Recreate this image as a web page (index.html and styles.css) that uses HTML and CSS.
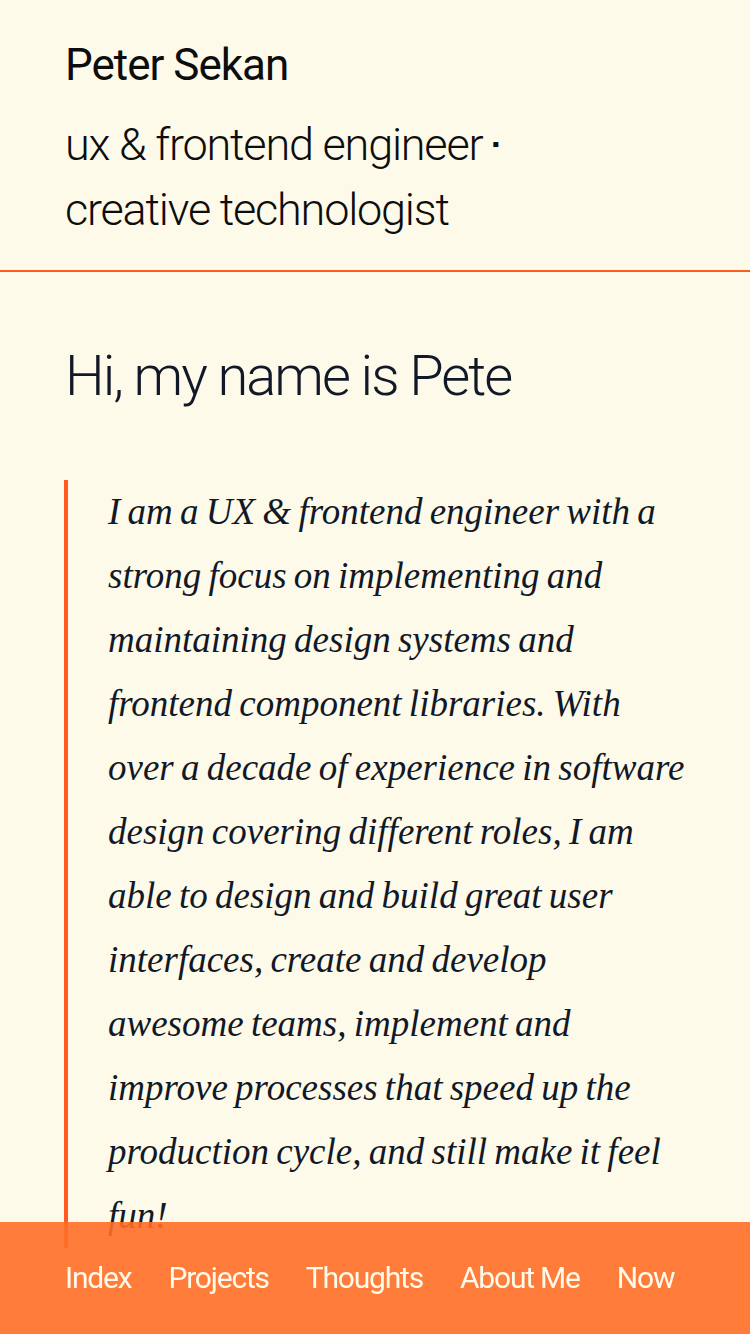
FILE: index.html
```html
<!DOCTYPE html>
<html lang="en">
<head>
<meta charset="utf-8">
<title>Peter Sekan</title>
<link rel="stylesheet" href="styles.css">
</head>
<body>
<header class="site-header">
  <div class="site-name">Peter Sekan</div>
  <div class="site-tagline">ux &amp; frontend engineer <span class="dot">▪</span><br>creative technologist</div>
</header>
<main class="content">
  <h1 class="greeting">Hi, my name is Pete</h1>
  <blockquote class="intro">
    <p>I am a UX &amp; frontend engineer with a strong focus on implementing and maintaining design systems and frontend component libraries. With over a decade of experience in software design covering different roles, I am able to design and build great user interfaces, create and develop awesome teams, implement and improve processes that speed up the production cycle, and still make it feel fun!</p>
  </blockquote>
</main>
<nav class="bottom-nav">
  <a href="#">Index</a>
  <a href="#">Projects</a>
  <a href="#">Thoughts</a>
  <a href="#">About Me</a>
  <a href="#">Now</a>
</nav>
</body>
</html>
```
FILE: styles.css
```css
html, body {
  margin: 0;
  padding: 0;
}
body {
  background: #fefae9;
  color: #111827;
  font-family: Roboto, "Liberation Sans", sans-serif;
  min-height: 1334px;
}
.site-header {
  height: 272px;
  box-sizing: border-box;
  padding: 37px 65px 0;
  border-bottom: 2px solid #ff5a1f;
  color: #0d0d0d;
}
.site-name {
  font-size: 44px;
  line-height: 56px;
  letter-spacing: -1px;
}
.site-tagline {
  margin-top: 19px;
  font-size: 45px;
  line-height: 65px;
  font-weight: 300;
  letter-spacing: -1.2px;
}
.site-tagline .dot {
  font-size: 20px;
  vertical-align: 9px;
}
.content {
  padding: 0 65px 140px 64px;
}
.greeting {
  margin: 68px 0 0 1px;
  font-weight: 300;
  font-size: 56px;
  line-height: 72px;
  letter-spacing: -2px;
  color: #111827;
}
.intro {
  margin: 68px 0 0;
  padding: 0 0 0 40px;
  border-left: 4px solid #ff5a1f;
}
.intro p {
  margin: 0;
  max-width: 578px;
  font-family: "Liberation Serif", "DejaVu Serif", serif;
  font-style: italic;
  font-size: 37px;
  line-height: 64px;
  word-spacing: -2px;
  color: #111827;
}
.bottom-nav {
  position: fixed;
  left: 0;
  right: 0;
  bottom: 0;
  height: 112px;
  box-sizing: border-box;
  padding: 36px 65px 0;
  display: flex;
  gap: 37px;
  background: rgba(255, 110, 40, 0.9);
}
.bottom-nav a {
  color: #fffbea;
  text-decoration: none;
  font-size: 30px;
  line-height: 40px;
  letter-spacing: -1.2px;
  white-space: nowrap;
}
```
